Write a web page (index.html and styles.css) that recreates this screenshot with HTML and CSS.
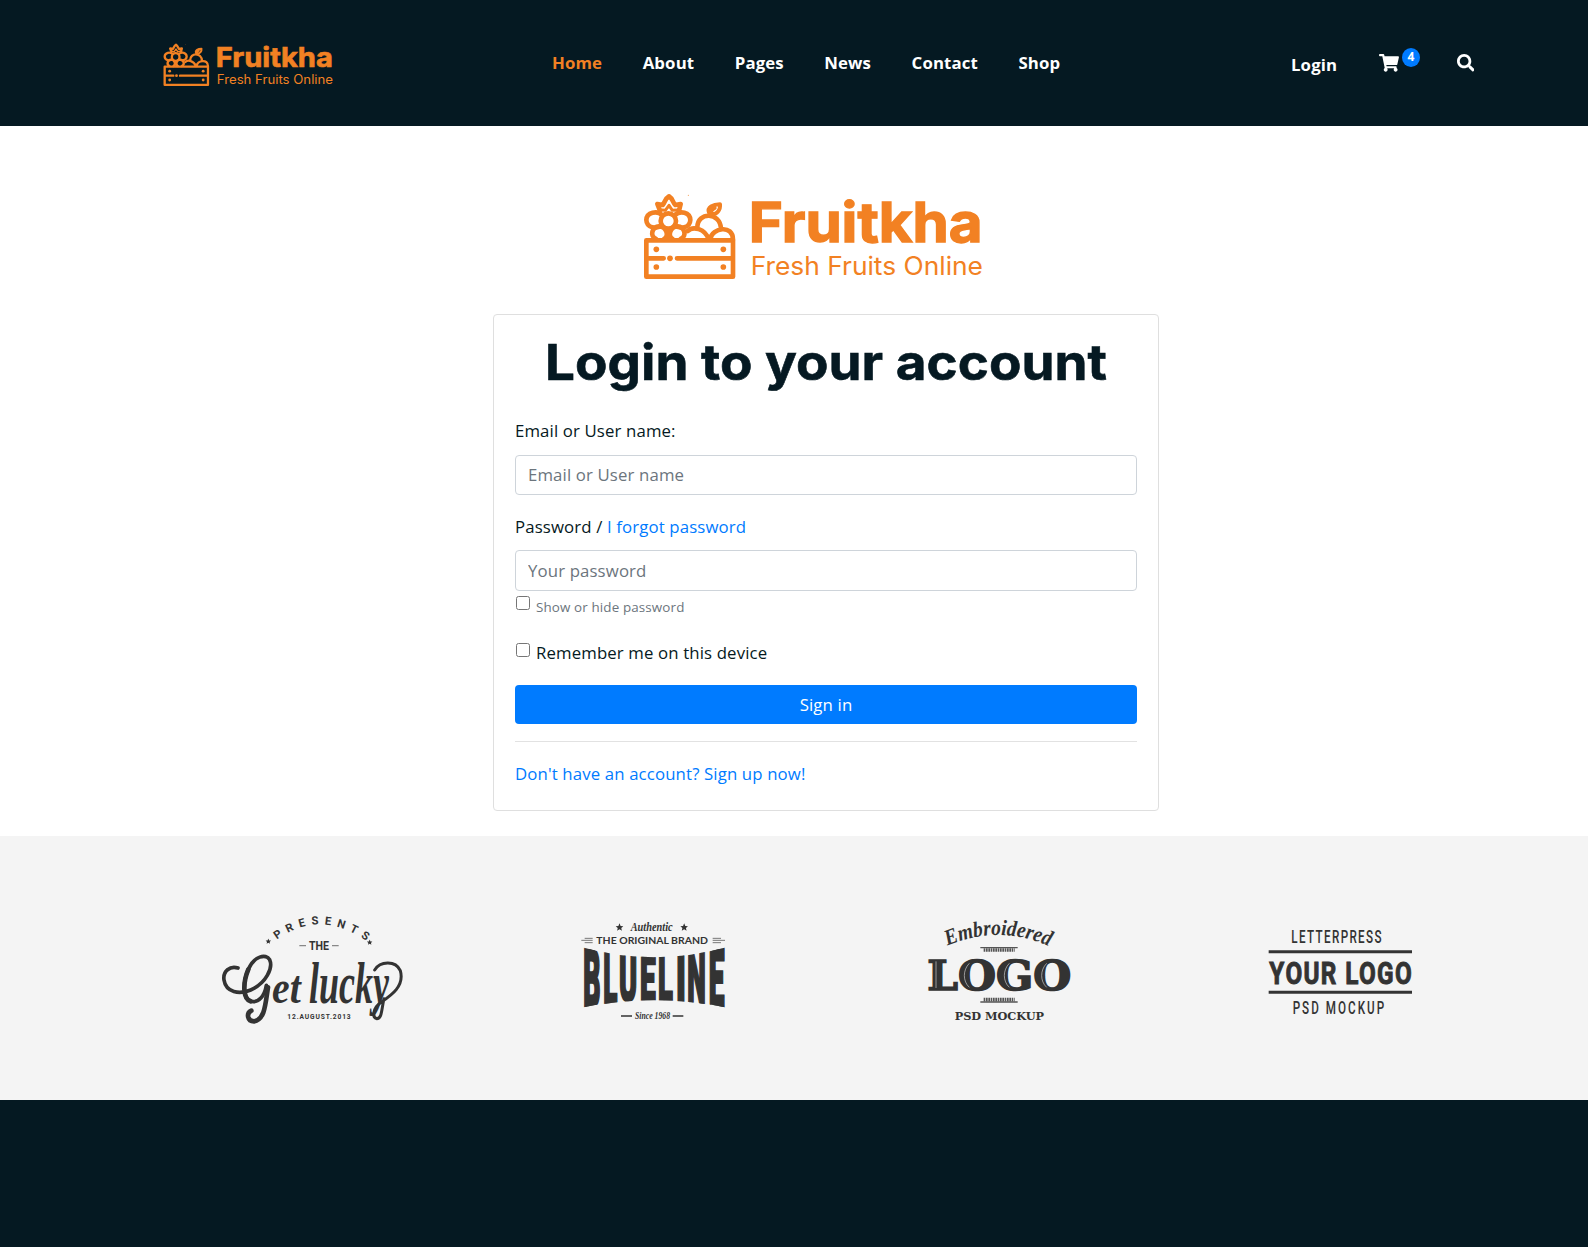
FILE: index.html
```html
<!DOCTYPE html>
<html lang="en">
<head>
<meta charset="utf-8">
<title>Fruitkha - Login</title>
<link rel="stylesheet" href="styles.css">
</head>
<body>
<svg class="defs" width="0" height="0" aria-hidden="true">
  <symbol id="crate" viewBox="39 39 280 261">
    <g fill="none" stroke="#f28123" stroke-width="14" stroke-linejoin="round" stroke-linecap="round">
      <rect x="49" y="181" width="260" height="109"/>
      <path d="M56 235H101M141 235H304"/>
      <circle cx="115" cy="123" r="23"/>
      <path d="M96 105C82 91 50 96 49 120C50 144 80 149 95 136M135 105C150 91 180 96 181 120C180 144 150 149 135 136"/>
      <path d="M78 177C58 168 66 140 88 139C110 140 118 168 102 177M152 177C172 168 164 140 142 139C120 140 112 168 128 177"/>
      <path d="M90 92L82 72L98 75C105 68 104 56 117 49C129 56 128 68 136 75L152 72L147 92"/>
      <path stroke-width="9" d="M96 90L106 91L117 76L127 91L143 90"/>
      <path d="M173 153C189 137 225 146 236 178M202 142C202 95 271 95 273 146M241 176C246 144 309 132 309 179"/>
      <path stroke-width="12" d="M239 105C240 96 246 88 254 84M237 98C231 82 249 73 270 73C272 90 260 103 247 102"/>
    </g>
    <g fill="#f28123">
      <circle cx="79" cy="208" r="8.5"/><circle cx="280" cy="208" r="8.5"/>
      <circle cx="79" cy="261" r="8.5"/><circle cx="280" cy="261" r="8.5"/><circle cx="120" cy="235" r="8.5"/>
      <circle cx="175" cy="46" r="1.5"/>
    </g>
  </symbol>
  <symbol id="star" viewBox="0 0 24 24"><path fill="#333" d="M12 1l3.2 7.3 7.8.8-5.9 5.2 1.8 7.7-6.9-4.1L5.100 22l1.800-7.700L1 9.100l7.800-.8z"/></symbol>
</svg>

<header class="header">
  <a class="brand"><svg width="170" height="43.500" viewBox="39 39 1020 261">
    <use href="#crate" x="39" y="39" width="280" height="261"/>
    <text class="logo-name" x="356" y="185" textLength="702" lengthAdjust="spacingAndGlyphs">Fruitkha</text>
    <text class="logo-tag" x="362" y="286" textLength="697" lengthAdjust="spacingAndGlyphs">Fresh Fruits Online</text>
  </svg></a>
  <nav class="nav">
    <a class="nav-link active">Home</a><a class="nav-link">About</a><a class="nav-link">Pages</a><a class="nav-link">News</a><a class="nav-link">Contact</a><a class="nav-link">Shop</a>
  </nav>
  <div class="tools">
    <a class="login">Login</a>
    <a class="cart">
      <svg width="20" height="17.700" viewBox="0 0 576 512"><path fill="#fff" d="M528.120 301.319l47.273-208C578.806 78.301 567.391 64 551.990 64H159.208l-9.166-44.810C147.758 8.021 137.930 0 126.529 0H24C10.745 0 0 10.745 0 24v16c0 13.255 10.745 24 24 24h69.883l70.248 343.435C147.325 417.100 136 435.222 136 456c0 30.928 25.072 56 56 56s56-25.072 56-56c0-15.674-6.447-29.835-16.824-40h209.647C430.447 426.165 424 440.326 424 456c0 30.928 25.072 56 56 56s56-25.072 56-56c0-22.172-12.888-41.332-31.579-50.405l5.517-24.276c3.413-15.018-8.002-29.319-23.403-29.319H218.117l-6.545-32h293.145c11.206 0 20.920-7.754 23.403-18.681z"/></svg>
      <span class="badge">4</span>
    </a>
    <a class="search"><svg width="17.600" height="17.600" viewBox="0 0 512 512"><path fill="#fff" d="M505 442.700L405.300 343c-4.500-4.500-10.600-7-17-7H372c27.600-35.300 44-79.700 44-128C416 93.100 322.900 0 208 0S0 93.100 0 208s93.100 208 208 208c48.300 0 92.700-16.400 128-44v16.300c0 6.400 2.500 12.500 7 17l99.700 99.700c9.400 9.400 24.600 9.400 33.900 0l28.300-28.300c9.400-9.400 9.400-24.600.1-34zM208 336c-70.700 0-128-57.200-128-128 0-70.700 57.200-128 128-128 70.700 0 128 57.200 128 128 0 70.700-57.200 128-128 128z"/></svg></a>
  </div>
</header>

<main class="main">
  <svg class="main-logo" width="340" height="87" viewBox="39 39 1020 261">
    <use href="#crate" x="39" y="39" width="280" height="261"/>
    <text class="logo-name" x="356" y="185" textLength="702" lengthAdjust="spacingAndGlyphs">Fruitkha</text>
    <text class="logo-tag" x="362" y="286" textLength="697" lengthAdjust="spacingAndGlyphs">Fresh Fruits Online</text>
  </svg>
  <form class="card">
    <h1 class="title"><svg class="title-art" width="562" height="72"><text class="title-text" x="-1" y="47" textLength="562" lengthAdjust="spacingAndGlyphs">Login to your account</text></svg></h1>
    <label class="label">Email or User name:</label>
    <input class="field" type="text" placeholder="Email or User name">
    <label class="label second">Password / <a class="link">I forgot password</a></label>
    <input class="field tall" type="password" placeholder="Your password">
    <label class="check small"><input class="box" type="checkbox"><span>Show or hide password</span></label>
    <label class="check remember"><input class="box" type="checkbox"><span>Remember me on this device</span></label>
    <button class="submit" type="button">Sign in</button>
    <hr class="rule">
    <a class="link signup">Don't have an account? Sign up now!</a>
  </form>
</main>

<section class="partners">
  <svg width="210" height="140" viewBox="0 0 630 420">
    <path id="arc1" fill="none" d="M200 119Q330 26 468 122"/>
    <text class="cond" font-size="34"><textPath href="#arc1" textLength="290">PRESENTS</textPath></text>
    <use href="#star" x="166" y="115" width="18" height="18"/><use href="#star" x="470" y="118" width="18" height="18"/>
    <path stroke="#888" stroke-width="4" d="M268 137H288M366 137H386"/>
    <text class="cond" font-size="40" x="297" y="150" textLength="60" lengthAdjust="spacingAndGlyphs">THE</text>
    <g fill="none" stroke="#333" stroke-linecap="round">
      <path stroke-width="11" d="M84 204C60 196 38 214 42 240C48 278 88 284 122 270C168 250 190 204 179 179C168 160 132 168 115 208C98 248 98 296 122 304C146 310 164 288 169 256"/>
      <path stroke-width="14" d="M115 208C98 248 98 296 122 304M174 262C166 310 166 358 132 364C112 364 108 340 124 332"/>
      <path stroke-width="9" d="M494 210C510 184 556 180 571 212C584 258 544 286 514 306C488 324 486 352 500 356C516 356 514 330 522 296"/>
    </g>
    <text class="script" font-size="142" x="186" y="308" textLength="86" lengthAdjust="spacingAndGlyphs">et</text>
    <text class="script" font-size="180" x="297" y="308" textLength="240" lengthAdjust="spacingAndGlyphs">lucky</text>
    <text class="cond" font-size="20" x="232" y="357" textLength="190">12.AUGUST.2013</text>
  </svg>

  <svg width="170" height="140" viewBox="0 0 510 420">
    <clipPath id="bulge"><path d="M30 140Q252 203 475 140V324Q252 278 30 324Z"/></clipPath>
    <use href="#star" x="136" y="69" width="25" height="25"/><use href="#star" x="330" y="69" width="25" height="25"/>
    <text class="hand" font-size="38" x="182" y="93" textLength="126" lengthAdjust="spacingAndGlyphs">Authentic</text>
    <text class="sansb" font-size="29" x="79" y="131" textLength="335" lengthAdjust="spacingAndGlyphs">THE ORIGINAL BRAND</text>
    <path stroke="#777" stroke-width="3" d="M44 115H68M34 121H68M44 128H68M428 115H453M428 121H465M428 128H453"/>
    <g class="block" clip-path="url(#bulge)">
      <text transform="translate(40 322) scale(.80 2.450)">B</text>
      <text transform="translate(100 311) scale(.78 2.220)">L</text>
      <text transform="translate(147 302) scale(.82 2.000)">U</text>
      <text transform="translate(210 299) scale(.84 1.860)">E</text>
      <text transform="translate(264 301) scale(.82 1.900)">L</text>
      <text transform="translate(318 304) scale(.98 2.020)">I</text>
      <text transform="translate(352 311) scale(.79 2.220)">N</text>
      <text transform="translate(416 322) scale(.84 2.450)">E</text>
    </g>
    <path stroke="#333" stroke-width="4" d="M153 348H186M308 348H340"/>
    <text class="hand" font-size="29" x="195" y="357" textLength="105" lengthAdjust="spacingAndGlyphs">Since 1968</text>
  </svg>

  <svg width="180" height="140" viewBox="0 0 540 420">
    <path id="arc3" fill="none" d="M112 137Q268 72 418 139"/>
    <text class="hand" font-size="66"><textPath href="#arc3" textLength="314" lengthAdjust="spacingAndGlyphs">Embroidered</textPath></text>
    <g stroke="#555" fill="none">
      <path stroke-width="4" d="M211 143H323M211 306H323"/>
      <path stroke-width="11" stroke-dasharray="5 2" d="M221 150H314M221 299H314"/>
    </g>
    <text class="slab heavy" font-size="124" x="52" y="269" textLength="432" lengthAdjust="spacingAndGlyphs">LOGO</text>
    <g fill="none" stroke="#ccc" stroke-width="2">
      <path d="M78 184V264"/>
      <path d="M178 190C158 210 158 244 178 262M298 190C278 210 278 244 298 262M410 190C390 210 390 244 410 262"/>
    </g>
    <text class="slab" font-size="34" x="134" y="360" textLength="268">PSD MOCKUP</text>
  </svg>

  <svg width="180" height="140" viewBox="0 0 540 420">
    <text class="cond light" font-size="53" transform="translate(124 130) scale(.66 1)" textLength="410">LETTERPRESS</text>
    <path stroke="#333" stroke-width="9" d="M56 155H486M56 277H486"/>
    <text class="cond wide" font-size="96" transform="translate(58 251) scale(.76 1)" textLength="562">YOUR LOGO</text>
    <text class="cond light" font-size="53" transform="translate(128 342) scale(.66 1)" textLength="416">PSD MOCKUP</text>
  </svg>
</section>
<footer class="footer"></footer>
</body>
</html>
```
FILE: styles.css
```css
* { box-sizing: border-box; }
body {
  margin: 0;
  min-height: 1247px;
  display: flex;
  flex-direction: column;
  background: #fff;
  color: #051922;
  font: 16.800px/26px "Open Sans", sans-serif;
  letter-spacing: 0.130px;
}
.defs { position: absolute; }
svg { display: block; letter-spacing: 0; }

.header {
  height: 126px;
  padding-left: 162.500px;
  display: flex;
  align-items: flex-start;
  background: #051922;
}
.brand { width: 389.500px; padding-top: 43px; }
.logo-name { font: 700 165px Inter, sans-serif; fill: #f28123; stroke: #f28123; stroke-width: 4px; }
.logo-tag { font: 400 77px Inter, sans-serif; fill: #f28123; }
.nav { width: 739px; padding-top: 50px; display: flex; gap: 40.500px; }
.nav-link, .login { color: #fff; font-weight: 700; }
.nav-link.active { color: #f28123; }
.tools { display: flex; align-items: flex-start; padding-top: 48px; }
.login { width: 88px; padding-top: 4px; }
.cart { width: 77.500px; display: flex; gap: 3px; }
.cart svg, .search svg { margin-top: 6px; }
.badge {
  width: 18px;
  height: 19px;
  border-radius: 50%;
  background: #007bff;
  color: #fff;
  font-size: 12px;
  font-weight: 700;
  line-height: 18px;
  text-align: center;
}

.main { height: 710px; padding: 67px 0 0 493px; }
.main-logo { margin-left: 150px; }
.card {
  width: 666px;
  height: 497px;
  margin-top: 34px;
  padding: 18px 21px 0;
  display: flex;
  flex-direction: column;
  border: 1px solid #dfdfdf;
  border-radius: 4px;
}
.title { height: 84px; margin: 0; padding-left: 31px; }
.title-art { overflow: visible; }
.title-text { font: 700 50px Inter, sans-serif; fill: #051922; stroke: #051922; stroke-width: 0.600px; }
.label { height: 38px; padding-top: 1px; }
.label.second { height: 40px; margin-top: 15px; padding-top: 4px; }
.link { color: #007bff; }
.field {
  height: 40px;
  padding: 0 12px 2px;
  border: 1px solid #ced4da;
  border-radius: 4px;
  font: inherit;
  letter-spacing: inherit;
}
.field.tall { height: 41px; padding-bottom: 0; }
.field::placeholder { color: #6c757d; opacity: 1; }
.check { display: flex; gap: 6px; height: 47px; padding-left: 1px; }
.box { width: 14px; height: 14px; margin: 5px 0 0; }
.check.small { color: #6c757d; font-size: 13.400px; line-height: 32px; }
.remember span { padding-top: 2px; }
.submit {
  height: 39px;
  border: 0;
  border-radius: 4px;
  background: #007bff;
  color: #fff;
  font: inherit;
  letter-spacing: inherit;
}
.rule { width: 100%; height: 1px; margin: 17px 0 19px; border: 0; background: #e2e2e2; }

.partners {
  height: 264px;
  padding: 64px 0 0 210px;
  display: grid;
  grid-template-columns: 360px 340px 340px 180px;
  align-items: start;
  background: #f4f4f4;
}
.partners text { fill: #333; }
.cond { font-family: "Liberation Sans Narrow", Roboto, sans-serif; font-weight: 700; }
.cond.light { font-weight: 500; }
.cond.wide { stroke: #333; stroke-width: 3px; }
.sansb { font-family: Lato, sans-serif; font-weight: 700; }
.block { font: 900 100px Roboto, sans-serif; stroke: #333; stroke-width: 4px; }
.script { font-family: "Liberation Serif", serif; font-style: italic; font-weight: 700; }
.hand { font-family: "Liberation Serif", serif; font-style: italic; font-weight: 700; }
.slab { font-family: "DejaVu Serif", serif; font-weight: 700; }
.slab.heavy { stroke: #333; stroke-width: 5px; }
.footer { flex: 1; background: #051922; }
```
